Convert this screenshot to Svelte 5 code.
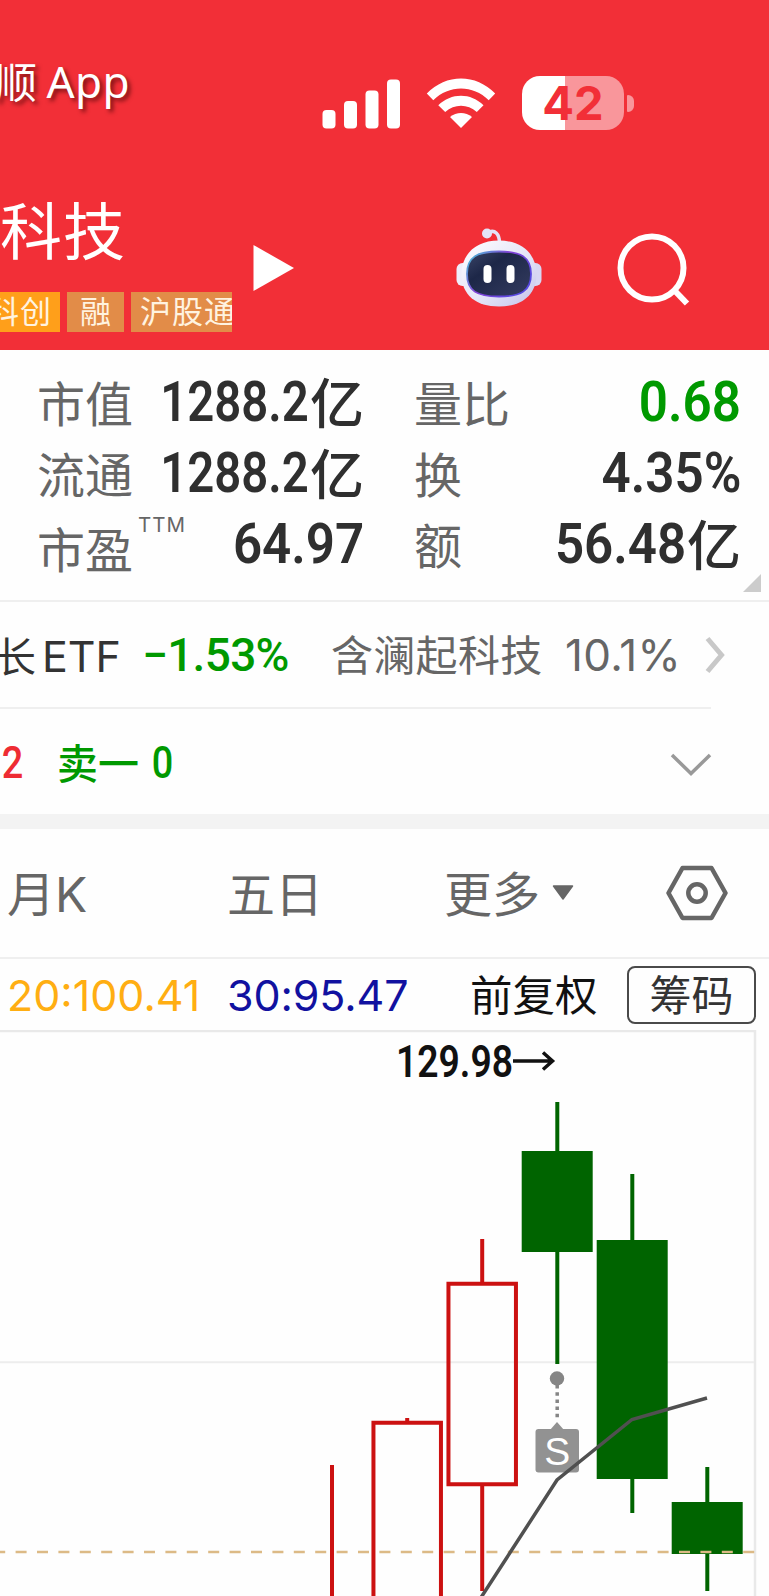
<script lang="ts">
  type Candle = {
    x: number;
    high: number;
    low: number;
    top: number;
    bottom: number;
    up: boolean;
  };

  type Stat = { label: string; value: string; unit?: string; note?: string; down?: boolean };

  const leftStats: Stat[] = [
    { label: '市值', value: '1288.2', unit: '亿' },
    { label: '流通', value: '1288.2', unit: '亿' },
    { label: '市盈', value: '64.97', note: 'TTM' }
  ];

  const rightStats: Stat[] = [
    { label: '量比', value: '0.68', down: true },
    { label: '换', value: '4.35%' },
    { label: '额', value: '56.48', unit: '亿' }
  ];

  // Chart coordinates, y starts at the top of the plot
  const candles: Candle[] = [
    { x: 332, high: 435, low: 600, top: 600, bottom: 640, up: true },
    { x: 407.2, high: 388, low: 600, top: 391, bottom: 640, up: true },
    { x: 482.2, high: 209, low: 561, top: 252, bottom: 456, up: true },
    { x: 557, high: 72, low: 334, top: 121, bottom: 222, up: false },
    { x: 632, high: 144, low: 483, top: 210, bottom: 449, up: false },
    { x: 707, high: 437, low: 561, top: 472, bottom: 524, up: false }
  ];

  const bodyWidth = 71;
  const average = '470,584 482,566 557,450 632,389.5 707,368';
</script>

<div class="screen">
  <header>
    <div class="status">
      <span class="back"><span class="cn">顺</span>App</span>
      <svg class="signal" width="78" height="50" viewBox="0 0 78 50" fill="#fff">
        <rect x="0.5" y="31" width="13" height="18.5" rx="4" />
        <rect x="22" y="22" width="13" height="27.5" rx="4" />
        <rect x="43.5" y="11.5" width="13" height="38" rx="4" />
        <rect x="65" y="0.5" width="13" height="49" rx="4" />
      </svg>
      <svg class="wifi" width="70" height="52" viewBox="0 0 70 52" fill="#fff">
        <path d="M0.8 15.5C20 -4.6 50 -4.6 69.2 15.5L62.7 22.2C47 6.5 23 6.5 7.3 22.2Z" />
        <path d="M12.3 27.3C25 14.5 45 14.5 57.5 27.3L50.8 34C41.5 25.5 28.5 25.5 19.2 34Z" />
        <path d="M24 39C30.5 33.5 39.5 33.5 46 39L35 50Z" />
      </svg>
      <div class="battery"><span>42</span></div>
      <i class="nub"></i>
    </div>

    <div class="title-bar">
      <div class="stock">
        <h1>科技</h1>
        <div class="tags">
          <span class="tag board">科创</span>
          <span class="tag">融</span>
          <span class="tag last">沪股通</span>
        </div>
      </div>
      <svg class="play" width="42" height="48" viewBox="0 0 42 48">
        <path d="M0.5 1L41 24L0.5 47Z" fill="#fff" />
      </svg>
      <svg class="robot" width="88" height="82" viewBox="0 0 88 82">
        <defs>
          <linearGradient id="shell" x1="0" y1="0" x2="1" y2="1">
            <stop offset="0.1" stop-color="#fafaff" />
            <stop offset="0.6" stop-color="#e2e2f6" />
            <stop offset="1" stop-color="#c3c1ea" />
          </linearGradient>
          <linearGradient id="rim" x1="0" y1="0" x2="1" y2="0.6">
            <stop offset="0" stop-color="#45c9d6" />
            <stop offset="0.5" stop-color="#8442d8" />
            <stop offset="1" stop-color="#5548e0" />
          </linearGradient>
          <linearGradient id="visor" x1="0" y1="0" x2="1" y2="1">
            <stop offset="0" stop-color="#3a4467" />
            <stop offset="0.35" stop-color="#1d2748" />
            <stop offset="1" stop-color="#343c60" />
          </linearGradient>
        </defs>
        <path d="M31 7C39 2.5 43.5 8 43.5 17" fill="none" stroke="#e4e3f7" stroke-width="3.5" />
        <circle cx="31" cy="7.5" r="5" fill="#e4e3f7" />
        <rect x="0.5" y="37" width="14" height="23" rx="6" fill="#eeeefb" />
        <rect x="72" y="37" width="13.5" height="23" rx="6" fill="#d8d7f3" />
        <path d="M43 14.5C67 14.5 80.500 29 80.500 48C80.500 69 66 80.500 43 80.500C20 80.500 5.500 69 5.500 48C5.500 29 19 14.500 43 14.500Z" fill="url(#shell)" />
        <path d="M43 25.500C65 25.500 75 31 75 48C75 65 65 70.500 43 70.500C21 70.500 11 65 11 48C11 31 21 25.500 43 25.500Z" fill="url(#visor)" stroke="url(#rim)" stroke-width="1.800" />
        <rect x="27.500" y="39" width="8" height="18" rx="4" fill="#fff" />
        <rect x="50.500" y="39" width="8" height="18" rx="4" fill="#fff" />
      </svg>
      <svg class="search" width="74" height="74" viewBox="0 0 74 74" fill="none" stroke="#fff" stroke-width="6">
        <circle cx="35" cy="35" r="31.5" />
        <path d="M57.500 57.500L70 70.500" />
      </svg>
    </div>
  </header>

  <section class="stats">
    {#each [leftStats, rightStats] as column, i}
      <div class="column" class:right={i === 1}>
        {#each column as stat}
          <div class="stat">
            <span class="label" class:low={stat.note}>{stat.label}</span>
            {#if stat.note}<sup>{stat.note}</sup>{/if}
            <span class="value" class:down={stat.down}><b class:long={stat.value.length > 5}>{stat.value}</b>{#if stat.unit}<em>{stat.unit}</em>{/if}</span>
          </div>
        {/each}
      </div>
    {/each}
    <i class="corner"></i>
  </section>

  <section class="etf">
    <span class="etf-name"><span class="cn">长</span>ETF</span>
    <span class="etf-change">−1.53%</span>
    <span class="holding">含澜起科技</span>
    <span class="weight">10.1%</span>
    <svg class="more" width="22" height="38" viewBox="0 0 22 38">
      <path d="M2.500 2.500L16.500 19L2.500 35.500" fill="none" stroke="#c8c8c8" stroke-width="5" />
    </svg>
  </section>

  <section class="quote">
    <span class="bid">2</span>
    <span class="ask">卖一</span>
    <span class="ask-volume">0</span>
    <svg width="42" height="24" viewBox="0 0 42 24">
      <path d="M2 2L21 20.500L40 2" fill="none" stroke="#999" stroke-width="3.500" />
    </svg>
  </section>

  <nav>
    <span class="tab month">月<span class="latin">K</span></span>
    <span class="tab five">五日</span>
    <span class="tab extra">更多</span>
    <svg class="caret" width="22" height="16" viewBox="0 0 22 16">
      <path d="M1.500 1H20.500L11 14Z" fill="#666" stroke="#666" stroke-width="1.500" stroke-linejoin="round" />
    </svg>
    <svg class="settings" width="62" height="56" viewBox="0 0 62 56" fill="none" stroke="#666" stroke-width="4.500">
      <path d="M16.500 3H45.500L59.500 28L45.500 53H16.500L2.500 28Z" stroke-linejoin="round" />
      <circle cx="31" cy="28" r="8.700" />
    </svg>
  </nav>

  <section class="averages">
    <span class="ma20">20:100.41</span>
    <span class="ma30">30:95.47</span>
    <span class="adjust">前复权</span>
    <button>筹码</button>
  </section>

  <svg class="chart" width="769" height="566" viewBox="0 0 769 566">
    <path d="M0 1H755V566" fill="none" stroke="#e9e9e9" stroke-width="2.500" />
    <path d="M0 332.300H754" stroke="#ededed" stroke-width="2" />

    {#each candles as c}
      {@const color = c.up ? '#cc1111' : '#006400'}
      {#if c.up}
        <path d="M{c.x} {c.high}V{c.top + 2}M{c.x} {c.bottom - 1}V{c.low}" stroke={color} stroke-width="4" />
        {#if c.top < 566}
          <rect x={c.x - bodyWidth / 2 + 1.75} y={c.top + 1.75} width={bodyWidth - 3.5} height={c.bottom - c.top - 3.5} fill="none" stroke={color} stroke-width="4" />
        {/if}
      {:else}
        <path d="M{c.x + 0.3} {c.high}V{c.low}" stroke={color} stroke-width="4" />
        <rect x={c.x - bodyWidth / 2 + 0.2} y={c.top} width={bodyWidth} height={c.bottom - c.top} fill={color} />
      {/if}
    {/each}

    <path d="M0 522H755" stroke="#dcba86" stroke-width="2.500" stroke-dasharray="11 10.400" stroke-dashoffset="5.800" />

    <text class="peak" x="396" y="46.500" textLength="117" lengthAdjust="spacingAndGlyphs">129.98</text>
    <path d="M513 31H552M543 22.500L552.500 31L543 39.500" fill="none" stroke="#111" stroke-width="3.500" />

    <circle cx="557" cy="348.500" r="7.200" fill="#858585" />
    <path d="M557.200 355V390" stroke="#858585" stroke-width="3.500" stroke-dasharray="3.500 3.700" />
    <path d="M550 400L557 392L564 400Z" fill="#929292" />
    <rect x="535.500" y="399" width="43.500" height="43.500" rx="3" fill="#929292" />
    <text class="sell" x="557.200" y="434.500" text-anchor="middle">S</text>

    <polyline points={average} fill="none" stroke="#505050" stroke-width="3.500" />
  </svg>
</div>

<style>
  :global(body) {
    margin: 0;
    background: #fefefe;
  }

  .screen {
    width: 769px;
    height: 1596px;
    overflow: hidden;
    background: #fefefe;
    font-family: 'Noto Sans CJK SC', sans-serif;
    white-space: nowrap;
  }

  svg {
    display: block;
    flex: none;
  }

  header {
    height: 350px;
    background: #f22f37;
    color: #fff;
  }

  .status {
    display: flex;
    align-items: flex-start;
    height: 200px;
  }

  .back {
    width: 322px;
    margin-top: 50px;
    margin-left: -5px;
    font: 44px/60px 'Noto Sans', sans-serif;
    letter-spacing: 0.4px;
    text-shadow: 3px 3px 4px rgba(60, 0, 0, 0.65);
  }

  .cn {
    font-family: 'Noto Sans CJK SC', sans-serif;
  }

  .back .cn {
    margin-right: 9px;
    font-size: 42px;
  }

  .signal {
    margin-top: 79px;
    margin-left: 5px;
  }

  .wifi {
    margin-top: 78px;
    margin-left: 26px;
  }

  .battery {
    width: 102px;
    height: 54px;
    margin-top: 76px;
    margin-left: 26px;
    border-radius: 18px;
    background: linear-gradient(90deg, #fff 43px, #f9969b 43px);
    color: #f22f37;
    font: 700 47px/54px Inter, sans-serif;
    text-align: center;
  }

  .nub {
    width: 7px;
    height: 17px;
    margin-top: 95px;
    margin-left: 3px;
    border-radius: 1px 6px 6px 1px;
    background: #f9969b;
  }

  .title-bar {
    display: flex;
    align-items: flex-start;
    height: 150px;
  }

  .stock {
    width: 232px;
    overflow: hidden;
  }

  h1 {
    height: 92px;
    margin: 0;
    font-size: 62px;
    font-weight: 400;
    line-height: 57px;
    letter-spacing: 1px;
  }

  .tags {
    display: flex;
    gap: 7px;
    margin-left: -22px;
  }

  .tag {
    flex: none;
    box-sizing: border-box;
    width: 57px;
    height: 40px;
    padding-left: 13px;
    background: #e28c48;
    color: #fff3e0;
    font-size: 31px;
    line-height: 35px;
    letter-spacing: 1px;
  }

  .tag.board {
    width: 82px;
    padding-left: 10px;
    background: #ff9f1a;
  }

  .tag.last {
    width: 120px;
    padding-left: 9px;
  }

  .play {
    margin-top: 44px;
    margin-left: 21px;
  }

  .robot {
    margin-top: 26px;
    margin-left: 161px;
  }

  .search {
    margin-top: 33px;
    margin-left: 73px;
  }

  .stats {
    position: relative;
    display: flex;
    box-sizing: border-box;
    height: 252px;
    padding: 19px 28px 0 37px;
    border-bottom: 2px solid #efefef;
    color: #666;
  }

  .column {
    flex: none;
    width: 327px;
  }

  .column.right {
    margin-left: 50px;
  }

  .stat {
    display: flex;
    height: 71px;
    line-height: 71px;
  }

  .label {
    font-size: 48px;
    line-height: 65px;
  }

  .label.low {
    padding-top: 4px;
  }

  sup {
    margin: 4px 0 0 5px;
    font: 20.5px/20px Inter, sans-serif;
    letter-spacing: 1px;
  }

  .value {
    display: flex;
    margin-left: auto;
    color: #2f2f2f;
  }

  .value.down {
    color: #009900;
  }

  b {
    font: 600 55px/67px Roboto, sans-serif;
    transform: scaleX(0.93);
    transform-origin: right;
  }

  /* six characters have to fit beside a two-character label */
  b.long {
    transform: scaleX(0.86);
  }

  em {
    margin-left: 1px;
    font-size: 54px;
    font-style: normal;
    font-weight: 500;
    line-height: 64px;
  }

  .corner {
    position: absolute;
    right: 8px;
    bottom: 8px;
    border-bottom: 18px solid #ccc;
    border-left: 18px solid transparent;
  }

  .etf {
    display: flex;
    align-items: center;
    box-sizing: border-box;
    width: 711px;
    height: 107px;
    border-bottom: 2px solid #efefef;
    color: #666;
    font-size: 42px;
  }

  .etf span {
    flex: none;
  }

  .etf-name {
    width: 147px;
    margin-left: -5px;
    color: #333;
    font: 43px/58px Inter, sans-serif;
  }

  .etf-name .cn {
    margin-right: 6px;
    font-size: 41px;
  }

  .etf-change {
    width: 189px;
    color: #009900;
    font: 500 46px/58px Roboto, sans-serif;
    letter-spacing: -0.7px;
  }

  .holding {
    width: 234px;
    padding-bottom: 5px;
    letter-spacing: 0.3px;
  }

  .weight {
    width: 140px;
    font: 44px/56px Inter, sans-serif;
    letter-spacing: 0.3px;
  }

  .quote {
    display: flex;
    align-items: center;
    height: 105px;
    border-bottom: 15px solid #f3f3f3;
    color: #009900;
    font-size: 41px;
    font-weight: 500;
  }

  .bid,
  .ask-volume {
    padding-top: 3px;
    font: 500 44px/60px Roboto, sans-serif;
    transform: scaleX(0.86);
    transform-origin: 12px;
  }

  .bid {
    width: 57px;
    color: #ee2c33;
  }

  .ask {
    width: 93px;
    padding-bottom: 2px;
  }

  .quote svg {
    margin-top: 6px;
    margin-left: 495px;
  }

  nav {
    display: flex;
    align-items: center;
    box-sizing: border-box;
    height: 130px;
    border-bottom: 2px solid #efefef;
    color: #666;
    font-size: 48px;
  }

  .tab {
    padding-bottom: 5px;
  }

  .month {
    width: 220px;
    margin-left: 7px;
  }

  .latin {
    font: 48px/60px Inter, sans-serif;
  }

  .five {
    width: 217px;
  }

  .extra {
    width: 108px;
  }

  .settings {
    margin-left: 92px;
  }

  .averages {
    display: flex;
    align-items: center;
    height: 71px;
    font: 430 43px/60px Inter, sans-serif;
  }

  .ma20 {
    width: 220px;
    margin-left: 7px;
    color: #ffae12;
  }

  .ma30 {
    width: 243px;
    color: #1111a0;
    letter-spacing: -0.1px;
  }

  .adjust {
    width: 157px;
    padding-bottom: 3px;
    color: #111;
    font-family: 'Noto Sans CJK SC', sans-serif;
    font-size: 42.5px;
    font-weight: 400;
  }

  button {
    box-sizing: border-box;
    width: 129px;
    height: 58px;
    padding: 0 0 4px;
    border: 2px solid #4a4a4a;
    border-radius: 8px;
    background: none;
    color: #333;
    font: 42px/50px 'Noto Sans CJK SC', sans-serif;
  }

  .peak {
    fill: #111;
    font: 600 44px Roboto, sans-serif;
  }

  .sell {
    fill: #fff;
    font: 39px 'Liberation Sans', sans-serif;
  }
</style>
